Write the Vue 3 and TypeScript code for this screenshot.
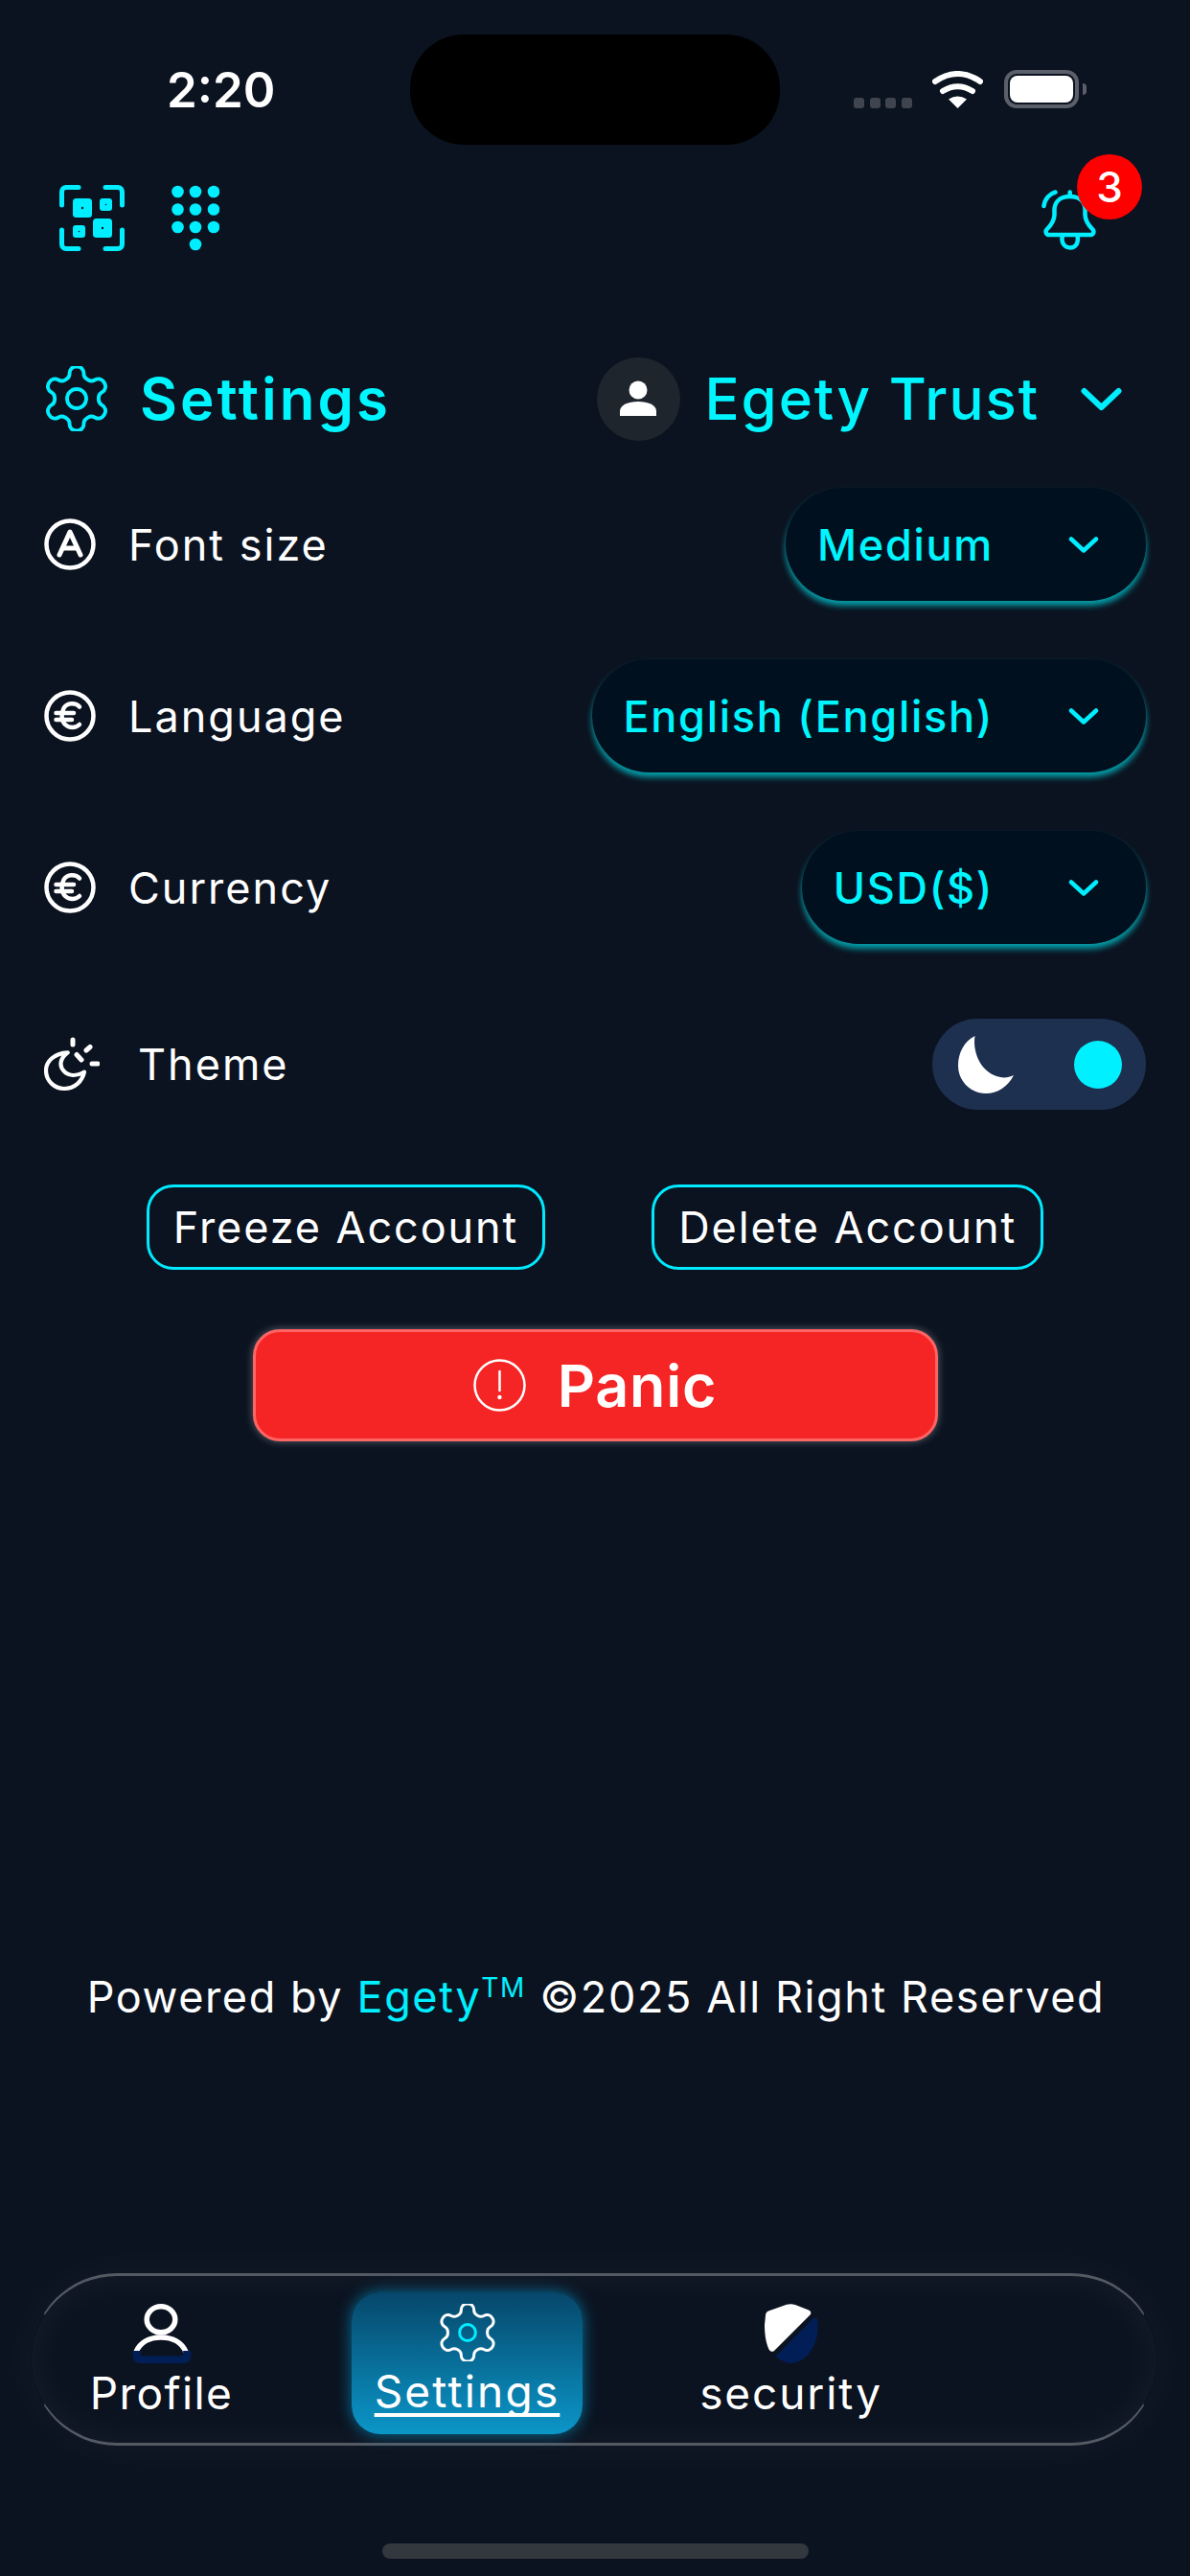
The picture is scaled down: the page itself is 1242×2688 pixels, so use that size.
<script setup lang="ts">
interface Row { label: string; value: string; icon: 'font' | 'euro' }
const rows: Row[] = [
  { label: 'Font size', value: 'Medium', icon: 'font' },
  { label: 'Language', value: 'English (English)', icon: 'euro' },
  { label: 'Currency', value: 'USD($)', icon: 'euro' },
]
const gear = 'M12.22 2h-.44a2 2 0 0 0-2 2v.18a2 2 0 0 1-1 1.73l-.43.25a2 2 0 0 1-2 0l-.15-.08a2 2 0 0 0-2.73.73l-.22.38a2 2 0 0 0 .73 2.73l.15.1a2 2 0 0 1 1 1.72v.51a2 2 0 0 1-1 1.74l-.15.09a2 2 0 0 0-.73 2.73l.22.38a2 2 0 0 0 2.73.73l.15-.08a2 2 0 0 1 2 0l.43.25a2 2 0 0 1 1 1.73V20a2 2 0 0 0 2 2h.44a2 2 0 0 0 2-2v-.18a2 2 0 0 1 1-1.73l.43-.25a2 2 0 0 1 2 0l.15.08a2 2 0 0 0 2.73-.73l.22-.39a2 2 0 0 0-.73-2.73l-.15-.08a2 2 0 0 1-1-1.74v-.5a2 2 0 0 1 1-1.74l.15-.09a2 2 0 0 0 .73-2.73l-.22-.38a2 2 0 0 0-2.73-.73l-.15.08a2 2 0 0 1-2 0l-.43-.25a2 2 0 0 1-1-1.73V4a2 2 0 0 0-2-2z'
const dots: [number, number][] = [
  [6.5, 7], [25, 7], [44, 7],
  [6.5, 25.5], [25, 25.5], [44, 25.5],
  [6.5, 44], [25, 44], [44, 44],
  [25, 62],
]
</script>

<template>
  <div class="screen">
    <div class="status">
      <div class="time">2:20</div>
      <div class="island"></div>
      <div class="sys">
        <div class="signal"><i></i><i></i><i></i><i></i></div>
        <svg class="wifi" width="53" height="40" viewBox="0 0 53 40">
          <path d="M3 11Q26.500-5 50 11" fill="none" stroke="#fff" stroke-width="6" stroke-linecap="round" />
          <path d="M11 21Q26.500 11.500 42 21" fill="none" stroke="#fff" stroke-width="6" stroke-linecap="round" />
          <path d="M17 29.500Q26.500 23.500 36 29.500L26.500 39Z" fill="#fff" />
        </svg>
        <div class="battery"><div class="batt-body"><div class="batt-fill"></div></div><div class="batt-cap"></div></div>
      </div>
    </div>

    <div class="topbar">
      <div class="top-left">
        <svg class="scan" width="68" height="69" viewBox="0 0 68 69">
          <g fill="none" stroke="#00eeff" stroke-width="5" stroke-linecap="round">
            <path d="M2.500 21V7a4.500 4.500 0 0 1 4.500-4.500H20" />
            <path d="M48 2.500H61a4.500 4.500 0 0 1 4.500 4.500V21" />
            <path d="M2.500 47V62a4.500 4.500 0 0 0 4.500 4.500H20" />
            <path d="M48 66.500H61a4.500 4.500 0 0 0 4.500-4.500V47" />
          </g>
          <g fill="#00eeff">
            <rect x="14" y="14" width="20" height="20" rx="3.500" />
            <rect x="42" y="14" width="13" height="13" rx="3" />
            <rect x="35" y="35" width="20" height="20" rx="3.500" />
            <rect x="14" y="42" width="13" height="13" rx="3" />
          </g>
          <g fill="#0b1320">
            <circle cx="24" cy="24" r="1.200" />
            <circle cx="48.500" cy="20.500" r=".8" />
            <circle cx="45" cy="45" r="1.200" />
            <circle cx="20.500" cy="48.500" r=".8" />
          </g>
        </svg>
        <svg class="dial" width="50" height="69" viewBox="0 0 50 69">
          <circle v-for="(d, i) in dots" :key="i" :cx="d[0]" :cy="d[1]" r="6.300" fill="#00eeff" />
        </svg>
      </div>
      <div class="bell-wrap">
        <svg class="bell" width="58" height="63" viewBox="0 0 58 63" fill="none" stroke="#00eeff" stroke-width="4.500" stroke-linecap="round" stroke-linejoin="round">
          <path d="M29.700 2.500V7" />
          <path d="M29.700 7C18 7 14 14 13.500 20V26C13.500 33 9 38 5.500 41.500 3.500 44 5 47 8 47H51C54 47 55.500 44 53.500 41.500 50 38 45.500 33 45.500 26V20C45 14 41 7 29.700 7Z" />
          <path d="M22 48C20 55 24 60.500 30 60.500 36 60.500 39 55 37.500 48" />
          <path d="M2.500 17C3.500 9 9 4 14.500 2.500" />
        </svg>
        <div class="badge">3</div>
      </div>
    </div>

    <div class="header">
      <div class="head-left">
        <svg class="head-gear" width="68" height="68" viewBox="1.800 1.800 20.400 20.400" fill="none" stroke="#00eeff" stroke-width="1.150" stroke-linecap="round" stroke-linejoin="round">
          <path :d="gear" />
          <circle cx="12" cy="12" r="3" />
        </svg>
        <h1 class="title">Settings</h1>
      </div>
      <div class="account">
        <div class="avatar">
          <svg width="38" height="38" viewBox="0 0 38 38" fill="#fff">
            <ellipse cx="19" cy="10" rx="9.500" ry="9.500" />
            <path d="M0 37V32C0 25.500 9 22 19 22S38 25.500 38 32V37Z" />
          </svg>
        </div>
        <span class="account-name">Egety Trust</span>
        <svg class="account-chev" width="43" height="25" viewBox="0 0 43 25" fill="none" stroke="#00eeff" stroke-width="6" stroke-linecap="round" stroke-linejoin="round">
          <path d="M3.500 4 21.500 21 39.500 4" />
        </svg>
      </div>
    </div>

    <div class="rows">
      <div v-for="r in rows" :key="r.label" class="row">
        <div class="row-left">
          <svg width="54" height="54" viewBox="0 0 54 54" fill="none" stroke="#fff">
            <circle cx="27" cy="27" r="24.500" stroke-width="4.500" />
            <g v-if="r.icon === 'font'" stroke-width="5" stroke-linecap="round" stroke-linejoin="round">
              <path d="M16 38 27 14 38 38" />
              <path d="M20 31H34" />
            </g>
            <g v-else stroke-width="4.500" stroke-linecap="round">
              <path d="M37 17.500C33 13 24 13 20.500 19 17.500 24.500 18 32 22 36 26 40 33 40 37 36" />
              <path d="M12.500 24H31M12.500 31H29" />
            </g>
          </svg>
          <span class="label">{{ r.label }}</span>
        </div>
        <div class="select">
          <span class="select-text">{{ r.value }}</span>
          <svg width="32" height="19" viewBox="0 0 32 19" fill="none" stroke="#00eeff" stroke-width="4.500" stroke-linecap="round" stroke-linejoin="round">
            <path d="M3 3.500 16 15.500 29 3.500" />
          </svg>
        </div>
      </div>
    </div>

    <div class="row theme-row">
      <div class="row-left theme-left">
        <svg width="58" height="58" viewBox="0 0 58 58" fill="none" stroke="#fff" stroke-linecap="round">
          <path d="M24.700 16.300C10 17 2 26 2 35 2 46 11 54 21 54 32 54 40 46 42 36.500 34 41 26 41 21 36 15 30 17 22 24.700 16.300Z" stroke-width="4.200" stroke-linejoin="round" />
          <path d="M30 3V8M44 14 48 10.500M50 28H56M34 18.500 39 24" stroke-width="5" />
        </svg>
        <span class="label">Theme</span>
      </div>
      <div class="toggle">
        <svg width="58" height="60" viewBox="0 0 58 60">
          <path d="M17.500 0C15 15 22 36 40 42 46 44 52 44 58 41 52 53 41 60 29 60 13 60 0 47 0 31 0 17 7 5 17.500 0Z" fill="#fff" />
        </svg>
        <div class="knob"></div>
      </div>
    </div>

    <div class="actions">
      <button class="outline">Freeze Account</button>
      <button class="outline">Delete Account</button>
    </div>

    <button class="panic">
      <svg width="55" height="55" viewBox="0 0 55 55" fill="none" stroke="#fff">
        <circle cx="27.500" cy="27.500" r="26" stroke-width="2.500" />
        <path d="M27.500 13V33" stroke-width="2.500" stroke-linecap="round" />
        <circle cx="27.500" cy="40" r="2.200" fill="#fff" stroke="none" />
      </svg>
      <span>Panic</span>
    </button>

    <p class="footer">Powered by <span class="brand">Egety<sup>TM</sup></span> ©2025 All Right Reserved</p>

    <nav class="nav">
      <div class="tab tab-profile">
        <svg width="62" height="62" viewBox="0 0 62 62" fill="none">
          <ellipse cx="30" cy="16.300" rx="14.800" ry="13.500" stroke="#fff" stroke-width="5.500" />
          <path d="M4 50C8 41 17 35 30 35S52 41 56 50" stroke="#fff" stroke-width="5.500" />
          <path d="M1 49C0 53 0 62 8 62H54C62 62 62 53 61 49H53C54 52 53 54.500 50 54.500H12C9 54.500 8 52 9 49Z" fill="#011e57" />
        </svg>
        <span>Profile</span>
      </div>
      <div class="tab tab-settings">
        <svg width="60" height="60" viewBox="2 2 20 20" fill="none" stroke-width="1" stroke-linecap="round" stroke-linejoin="round">
          <path :d="gear" stroke="#fff" />
          <circle cx="12" cy="12" r="2.800" stroke="#00eeff" />
        </svg>
        <span class="underlined">Settings</span>
      </div>
      <div class="tab tab-security">
        <svg width="57" height="62" viewBox="0 0 57 62">
          <path d="M2 12C2 10 3 8.500 5 7.500L24 0.800C27 0 30 0 33 1L47 6.500C49.500 7.500 50 10 48.500 11.500L11 49C9 50.500 7 50 5.500 47.500 2 40 1 30 1 22Z" fill="#fff" />
          <path d="M51 16C53 14 56 14.500 56.500 18 57 30 55.500 40 50 48 45 56 38 61 29 62 22 61 16 58 12.500 55Z" fill="#011e57" />
        </svg>
        <span>security</span>
      </div>
    </nav>

    <div class="home"></div>
  </div>
</template>

<style scoped>
.screen {
  width: 1242px;
  height: 2688px;
  background: #0b1320;
  overflow: hidden;
  display: flex;
  flex-direction: column;
  font-family: Inter, "Liberation Sans", sans-serif;
  color: #fff;
}
.status {
  display: grid;
  grid-template-columns: 428px 386px 1fr;
  height: 113px;
  margin-top: 36px;
}
.time {
  font-size: 51px;
  font-weight: 600;
  padding-left: 174px;
  line-height: 115px;
}
.island {
  background: #000;
  border-radius: 56px;
}
.sys {
  display: flex;
  align-items: flex-start;
  padding: 37px 0 0 77px;
}
.signal {
  display: flex;
  gap: 5.500px;
  margin-top: 29px;
  width: 82px;
}
.signal i {
  width: 11px;
  height: 11px;
  border-radius: 3px;
  background: #40444e;
}
.wifi { margin-right: 22px; margin-top: 1px; }
.battery { display: flex; align-items: center; }
.batt-body {
  width: 78px;
  height: 40px;
  border: 4px solid #5b5f6a;
  border-radius: 13px;
  padding: 2px;
  box-sizing: border-box;
}
.batt-fill { width: 100%; height: 100%; background: #fff; border-radius: 8px; }
.batt-cap { width: 4px; height: 12px; margin-left: 4px; background: #5b5f6a; border-radius: 0 6px 6px 0; }

.topbar {
  margin-top: 44px;
  height: 69px;
  padding: 0 97px 0 62px;
  display: flex;
  justify-content: space-between;
  align-items: flex-start;
}
.top-left { display: flex; gap: 49px; }
.bell-wrap { position: relative; margin-top: 5px; }
.badge {
  position: absolute;
  left: 37px;
  top: -37px;
  width: 68px;
  height: 68px;
  border-radius: 50%;
  background: #fe0000;
  text-align: center;
  line-height: 68px;
  font-size: 44px;
  font-weight: 500;
}

.header {
  margin-top: 110px;
  height: 88px;
  padding: 0 71px 0 46px;
  display: flex;
  align-items: center;
  justify-content: space-between;
}
.head-left { display: flex; align-items: center; gap: 32px; }
.title {
  margin: 0;
  font-size: 60px;
  font-weight: 600;
  letter-spacing: 3px;
  color: #00f6ff;
  line-height: 1;
}
.account { display: flex; align-items: center; }
.avatar {
  width: 87px;
  height: 87px;
  border-radius: 50%;
  background: #1f252d;
  display: flex;
  align-items: center;
  justify-content: center;
}
.account-name {
  margin-left: 26px;
  margin-right: 43px;
  font-size: 60px;
  font-weight: 500;
  letter-spacing: 1.900px;
  color: #00f6ff;
  line-height: 1;
}

.rows {
  margin-top: 49px;
  display: flex;
  flex-direction: column;
  gap: 61px;
}
.row {
  display: flex;
  align-items: center;
  justify-content: space-between;
  padding: 0 46px;
}
.row-left { display: flex; align-items: center; gap: 34px; }
.label {
  font-size: 45px;
  font-weight: 400;
  letter-spacing: 2px;
}
.select {
  height: 118px;
  box-sizing: border-box;
  padding: 0 49px 0 33px;
  border-radius: 59px;
  background: #00101e;
  display: flex;
  align-items: center;
  gap: 78px;
  box-shadow: 0 5px 6px rgba(0, 235, 245, 0.65);
}
.select-text {
  font-size: 45px;
  font-weight: 500;
  letter-spacing: 1.700px;
  color: #00f6ff;
}
.theme-row { margin-top: 78px; }
.theme-left { gap: 40px; }
.toggle {
  width: 223px;
  height: 95px;
  border-radius: 48px;
  background: #1e3050;
  box-sizing: border-box;
  padding: 0 25px 0 27px;
  display: flex;
  align-items: center;
  justify-content: space-between;
}
.knob { width: 50px; height: 50px; border-radius: 50%; background: #00f0ff; }

.actions {
  margin-top: 78px;
  display: flex;
  justify-content: center;
  gap: 111px;
}
.outline {
  height: 89px;
  padding: 0 25px;
  border: 3px solid #00eaff;
  border-radius: 28px;
  background: transparent;
  color: #fff;
  font-family: inherit;
  font-size: 45px;
  font-weight: 400;
  letter-spacing: 1.900px;
}
.panic {
  margin: 62px auto 0;
  width: 715px;
  height: 117px;
  background: #f62525;
  border: 3px solid #ff6464;
  border-radius: 28px;
  box-shadow: 0 0 8px rgba(255, 255, 255, 0.35);
  color: #fff;
  font-family: inherit;
  font-size: 61px;
  font-weight: 600;
  letter-spacing: 0.800px;
  display: flex;
  align-items: center;
  justify-content: center;
  gap: 33px;
}
.footer {
  margin: 550px 0 0;
  padding-left: 2px;
  line-height: 60px;
  text-align: center;
  font-size: 45px;
  letter-spacing: 1.600px;
}
.brand { color: #00f0ff; }
.brand sup { font-size: 28px; line-height: 0; }

.nav {
  margin: 258px 34px 0 32px;
  height: 180px;
  box-sizing: border-box;
  border: 3px solid rgba(255, 255, 255, 0.3);
  border-left: 1px solid transparent;
  border-right: 1px solid transparent;
  border-radius: 90px;
  box-shadow: inset 0 0 40px rgba(255, 255, 255, 0.05), 0 0 50px rgba(255, 255, 255, 0.04);
  display: flex;
  align-items: flex-start;
}
.tab {
  display: flex;
  flex-direction: column;
  align-items: center;
  font-size: 46px;
  letter-spacing: 2.200px;
  line-height: 54px;
  box-sizing: border-box;
}
.tab span { margin-top: 4px; }
.tab-profile { width: 145px; margin-left: 63px; padding-top: 29px; letter-spacing: 1.400px; }
.tab-settings {
  width: 241px;
  height: 148px;
  margin-left: 126px;
  margin-top: 17px;
  padding-top: 12px;
  border-radius: 30px;
  background: linear-gradient(180deg, #06476a, #0b96c8);
  box-shadow: 0 0 16px rgba(0, 190, 255, 0.55);
}
.underlined {
  text-decoration: underline;
  text-decoration-skip-ink: none;
  text-underline-offset: 6px;
  text-decoration-thickness: 4px;
}
.tab-security { width: 183px; margin-left: 126px; padding-top: 29px; letter-spacing: 1.900px; }
.home {
  margin: 102px auto 0;
  width: 445px;
  height: 16px;
  border-radius: 8px;
  background: #33373e;
}
</style>
